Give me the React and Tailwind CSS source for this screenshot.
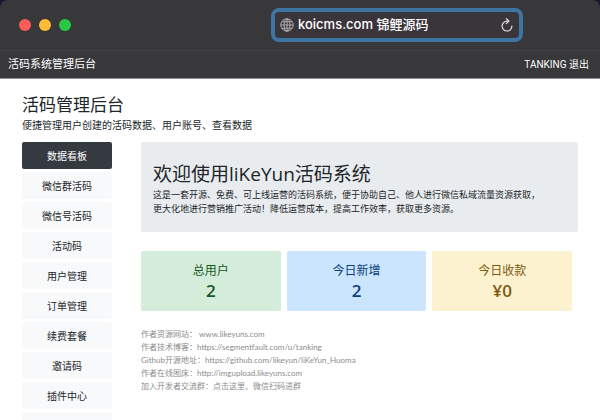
import React, { useState } from "react";

const menu = [
  "数据看板",
  "微信群活码",
  "微信号活码",
  "活动码",
  "用户管理",
  "订单管理",
  "续费套餐",
  "邀请码",
  "插件中心",
];

const stats = [
  { label: "总用户", value: "2", color: "bg-[#d4edda] text-[#155724]" },
  { label: "今日新增", value: "2", color: "bg-[#cce5ff] text-[#0b3f7d]" },
  { label: "今日收款", value: "¥0", color: "bg-[#fdf2cf] text-[#7a5a10]" },
];

const links = [
  { label: "作者资源网站： ", text: "www.likeyuns.com" },
  { label: "作者技术博客：", text: "https://segmentfault.com/u/tanking" },
  { label: "Github开源地址：", text: "https://github.com/likeyun/liKeYun_Huoma" },
  { label: "作者在线图床：", text: "http://imgupload.likeyuns.com" },
  { label: "加入开发者交流群：", text: "点击这里、微信扫码进群" },
];

function BrowserBar() {
  const [url, setUrl] = useState("koicms.com 锦鲤源码");

  return (
    <div className="flex h-[51px] items-center justify-between border-b border-[#424145] pl-[19px] pr-[77px]">
      <div className="flex gap-2">
        <span className="size-3 rounded-full bg-[#fc5b57]" />
        <span className="size-3 rounded-full bg-[#fdbc38]" />
        <span className="size-3 rounded-full bg-[#29c945]" />
      </div>
      <div className="flex h-[34px] w-[252px] items-center rounded-lg border-4 border-[#3d75a3] bg-[#3a353b] px-[5px]">
        <svg viewBox="0 0 14 14" className="size-[14px] shrink-0 text-[#b9b8bb]" fill="none" stroke="currentColor" strokeWidth="0.9">
          <circle cx="7" cy="7" r="6.2" />
          <ellipse cx="7" cy="7" rx="3" ry="6.2" />
          <path d="M7 0.8V13.2M0.8 7H13.2M1.8 3.8H12.2M1.8 10.2H12.2" />
        </svg>
        <input
          type="text"
          aria-label="URL"
          value={url}
          onChange={(e) => setUrl(e.target.value)}
          className="ml-1 min-w-0 flex-1 bg-transparent font-['Inter','Noto_Sans_CJK_SC',sans-serif] text-[13px] font-medium text-white outline-none"
        />
        <button type="button" aria-label="Reload" className="text-[#e6e5e8]">
          <svg viewBox="0 0 14 14" className="size-[14px]" fill="none" stroke="currentColor" strokeWidth="1.2" strokeLinecap="round" strokeLinejoin="round">
            <path d="M8.6 3.2H7A4.9 4.9 0 1 0 11.9 8.1" />
            <path d="M6.4 0.7L8.9 3.2L6.4 5.7" />
          </svg>
        </button>
      </div>
    </div>
  );
}

function Sidebar() {
  const [active, setActive] = useState(menu[0]);

  return (
    <nav className="flex w-[90px] shrink-0 flex-col gap-[3px]">
      {menu.map((item) => (
        <button
          key={item}
          type="button"
          onClick={() => setActive(item)}
          className={`h-[27px] shrink-0 rounded-xs pt-px text-[10px] ${item === active ? "bg-[#343a40] text-white" : "bg-[#f8f9fa] text-[#212529]"}`}>
          {item}
        </button>
      ))}
      <div className="h-[27px] shrink-0 rounded-xs bg-[#f8f9fa]" />
    </nav>
  );
}

function App() {
  return (
    <div className="h-screen overflow-hidden bg-white font-['Open_Sans','Noto_Sans_CJK_SC',sans-serif] text-[#212529]">
      <div className="bg-[#1b1733]">
        <header className="rounded-t-lg border-b border-[#8f8f91] bg-[#38373a]">
          <BrowserBar />
          <div className="flex h-[27px] items-center justify-between pl-2 pr-[11px] text-white">
            <span className="text-[11px]">活码系统管理后台</span>
            <a href="#logout" className="font-['Roboto','Noto_Sans_CJK_SC',sans-serif] text-[10px]">TANKING 退出</a>
          </div>
        </header>
      </div>

      <main className="px-[22px] pt-[14px]">
        <h1 className="text-[17px] leading-6">活码管理后台</h1>
        <p className="text-[10px] leading-4">便捷管理用户创建的活码数据、用户账号、查看数据</p>

        <div className="mt-[9px] flex gap-[29px]">
          <Sidebar />
          <div className="min-w-0 flex-1">
            <section className="rounded-xs bg-[#e9ecef] px-3 pb-4 pt-[18px]">
              <h2 className="text-[19px] leading-7">欢迎使用liKeYun活码系统</h2>
              <p className="text-[9px] leading-[14px]">
                这是一套开源、免费、可上线运营的活码系统，便于协助自己、他人进行微信私域流量资源获取，
                <br />
                更大化地进行营销推广活动！降低运营成本，提高工作效率，获取更多资源。
              </p>
            </section>

            <div className="mt-[19px] grid grid-cols-3">
              {stats.map((stat) => (
                <div key={stat.label} className={`mr-1.5 h-[60px] rounded-xs pt-[10px] text-center ${stat.color}`}>
                  <div className="text-[12px] leading-5">{stat.label}</div>
                  <div className="text-[17px] font-semibold leading-5">{stat.value}</div>
                </div>
              ))}
            </div>

            <div className="mt-[17px] font-['Lato','Noto_Sans_CJK_SC',sans-serif] text-[8px] leading-[13px] text-[#8c8c8c]">
              {links.map((link) => (
                <p key={link.label}>
                  {link.label}
                  <a href="#link">{link.text}</a>
                </p>
              ))}
            </div>
          </div>
        </div>
      </main>
    </div>
  );
}

export default App;
